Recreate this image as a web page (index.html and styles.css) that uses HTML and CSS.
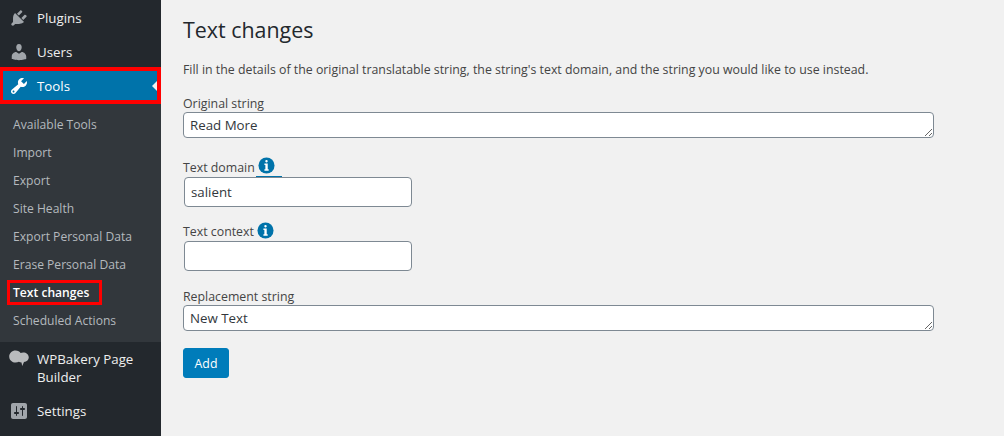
FILE: index.html
```html
<!DOCTYPE html>
<html lang="en">
<head>
    <meta charset="UTF-8">
    <title>Text changes</title>
    <link rel="stylesheet" href="styles.css">
</head>
<body>
    <div class="layout">
        <nav class="sidebar">
            <a class="menu-item">
                <svg class="menu-icon" viewBox="0 0 20 20"><path d="M13.11 4.36L9.87 7.6 8 5.73l3.24-3.24c.35-.34 1.05-.2 1.56.32.52.51.66 1.21.31 1.55zm-8 1.77l.91-1.12 9.01 9.01-1.19.84c-.71.71-2.63 1.16-3.82 1.16H6.14L4.9 17.26c-.59.59-1.54.59-2.12 0-.59-.58-.59-1.53 0-2.12l1.24-1.24v-3.88c0-1.13.4-3.19 1.09-3.89zm7.26 3.97l3.24-3.24c.34-.35 1.04-.21 1.55.31.52.51.66 1.21.31 1.55l-3.24 3.25z"/></svg>
                <span>Plugins</span>
            </a>
            <a class="menu-item">
                <svg class="menu-icon" viewBox="0 0 20 20"><path d="M10 9.25c-2.27 0-2.73-3.44-2.73-3.44C7 4.02 7.82 2 9.97 2c2.16 0 2.98 2.02 2.71 3.81 0 0-.41 3.44-2.68 3.44zm0 2.57L12.72 10c2.39 0 4.52 2.33 4.52 4.53v2.49s-3.65 1.13-7.24 1.13c-3.65 0-7.24-1.13-7.24-1.13v-2.49c0-2.25 1.94-4.48 4.47-4.48z"/></svg>
                <span>Users</span>
            </a>
            <a class="menu-item current">
                <svg class="menu-icon" viewBox="0 0 20 20"><path d="M16.68 9.77c-1.34 1.34-3.3 1.67-4.95.99l-5.41 6.52c-.99.99-2.59.99-3.58 0s-.99-2.59 0-3.57l6.52-5.42c-.68-1.65-.35-3.61.99-4.95 1.28-1.28 3.12-1.62 4.72-1.06l-2.89 2.89 2.82 2.82 2.86-2.87c.53 1.58.18 3.39-1.08 4.65zM3.81 16.21c.4.39 1.04.39 1.43 0 .4-.4.4-1.04 0-1.43-.39-.4-1.03-.4-1.43 0-.39.39-.39 1.03 0 1.43z"/></svg>
                <span>Tools</span>
            </a>
            <ul class="submenu">
                <li>Available Tools</li>
                <li>Import</li>
                <li>Export</li>
                <li>Site Health</li>
                <li>Export Personal Data</li>
                <li>Erase Personal Data</li>
                <li class="active"><span class="highlight-box">Text changes</span></li>
                <li>Scheduled Actions</li>
            </ul>
            <a class="menu-item tall">
                <svg class="menu-icon cloud" viewBox="0 0 20 20"><path d="M6.500 0.500C9 0.500 10.800 1.600 11.600 3 12.300 2.600 13.200 2.400 14.200 2.400 17.300 2.400 19.800 4.500 19.800 7.300 19.800 9.800 17.800 11.800 15 12.100L13.200 16 12.500 12.600C11.500 12.600 10.600 12.300 9.900 11.800 9 12.300 7.900 12.600 6.600 12.600 3 12.600 0.200 10 0.200 6.500 0.200 3.200 3 0.500 6.500 0.500z"/></svg>
                <span>WPBakery Page Builder</span>
            </a>
            <a class="menu-item">
                <svg class="menu-icon" viewBox="0 0 20 20"><path d="M18 16V4c0-1.100-.9-2-2-2H4c-1.100 0-2 .9-2 2v12c0 1.100.9 2 2 2h12c1.100 0 2-.9 2-2zM8 11h1c.55 0 1 .45 1 1s-.45 1-1 1H8v1.500c0 .28-.22.5-.5.5s-.5-.22-.5-.5V13H6c-.55 0-1-.45-1-1s.45-1 1-1h1V5.500c0-.28.22-.5.5-.5s.5.22.5.5V11zm5-2h-1c-.55 0-1-.45-1-1s.45-1 1-1h1V5.500c0-.28.22-.5.5-.5s.5.22.5.5V7h1c.55 0 1 .45 1 1s-.45 1-1 1h-1v5.500c0 .28-.22.5-.5.5s-.5-.22-.5-.5V9z"/></svg>
                <span>Settings</span>
            </a>
        </nav>

        <main class="content">
            <h1>Text changes</h1>
            <p class="intro">Fill in the details of the original translatable string, the string's text domain, and the string you would like to use instead.</p>
            <form class="changes-form">
                <div class="field field-long">
                    <label>Original string</label>
                    <textarea class="text-area" rows="1">Read More</textarea>
                </div>
                <div class="field field-domain">
                    <label>Text domain
                        <span class="info-wrap underlined">
                            <svg class="info" viewBox="0 0 18 18"><circle cx="9" cy="9" r="8.500"/><rect x="7.700" y="3.200" width="2.600" height="2.600" rx="1.200"/><path d="M6.800 7h3.500v6h1v1.500H6.800V13h1V8.500h-1z"/></svg>
                        </span>
                    </label>
                    <input class="text-input" type="text" value="salient">
                </div>
                <div class="field field-context">
                    <label>Text context
                        <span class="info-wrap">
                            <svg class="info" viewBox="0 0 18 18"><circle cx="9" cy="9" r="8.500"/><rect x="7.700" y="3.200" width="2.600" height="2.600" rx="1.200"/><path d="M6.800 7h3.500v6h1v1.500H6.800V13h1V8.500h-1z"/></svg>
                        </span>
                    </label>
                    <input class="text-input" type="text">
                </div>
                <div class="field field-long field-replace">
                    <label>Replacement string</label>
                    <textarea class="text-area" rows="1">New Text</textarea>
                </div>
                <button class="add-btn" type="button">Add</button>
            </form>
        </main>
    </div>
</body>
</html>
```

FILE: styles.css
```css
* {
    box-sizing: border-box;
}

html, body {
    margin: 0;
    height: 436px;
    overflow: hidden;
}

body {
    font-family: "Open Sans", "Noto Sans", sans-serif;
    font-size: 12.35px;
    background-color: #f1f1f1;
    color: #444;
}

.layout {
    display: flex;
    height: 436px;
}

/* Admin sidebar */
.sidebar {
    width: 161px;
    flex-shrink: 0;
    padding-top: 1px;
    background-color: #23282d;
    border-right: 1px solid #23282d;
}

.menu-item {
    display: flex;
    align-items: center;
    height: 34px;
    padding-left: 9px;
    font-size: 13.3px;
    color: #eee;
}

.menu-icon {
    width: 20px;
    height: 20px;
    margin-right: 8px;
    flex-shrink: 0;
    fill: #a0a5aa;
}

.menu-icon.cloud {
    fill: #b9bbbd;
}

.menu-item.current {
    position: relative;
    height: 37px;
    margin: -2px -1px 0 0;
    border: solid #f00;
    border-width: 4px 4px 4px 3px;
    padding-left: 6px;
    background-color: #0073aa;
    color: #fff;
}

.menu-item.current .menu-icon {
    fill: #fff;
}

/* little arrow pointing at the content */
.menu-item.current::after {
    content: "";
    position: absolute;
    right: 0;
    top: 10px;
    border: 5px solid transparent;
    border-left-width: 0;
    border-right-color: #f1f1f1;
}

.menu-item.tall {
    align-items: flex-start;
    height: 52px;
    padding-top: 8px;
    line-height: 18px;
}

.submenu {
    list-style: none;
    margin: 0 -1px 0 0;
    padding: 7px 0;
    background-color: #32373c;
    color: #b4b9be;
    font-size: 12.1px;
}

.submenu li {
    height: 28px;
    padding-left: 13px;
    line-height: 28px;
}

.submenu .active {
    color: #fff;
    font-weight: 600;
}

.highlight-box {
    display: inline-block;
    height: 25px;
    margin: 1px 0 0 -6px;
    padding: 0 10px 0 3px;
    border: 3px solid #f00;
    line-height: 19px;
    vertical-align: top;
}

/* Main content */
.content {
    flex: 1;
    padding: 0 70px 0 22px;
}

h1 {
    margin: 17px 0 0;
    font-size: 21.4px;
    font-weight: 400;
    line-height: 26px;
    color: #23282d;
}

.intro {
    margin: 17px 0 0;
    line-height: 19px;
}

.changes-form {
    margin-top: 15px;
}

.field label {
    display: flex;
    height: 19px;
    line-height: 19px;
}

.field-long label {
    height: 18px;
}

.field-domain {
    margin-top: 20px;
}

.field-context {
    margin-top: 15px;
}

.field-replace {
    margin-top: 16px;
}

.text-area,
.text-input {
    display: block;
    border: 1px solid #7e8993;
    border-radius: 4px;
    background-color: #fff;
    color: #32373c;
    font-family: inherit;
    font-size: 13.3px;
}

.text-area {
    width: 751px;
    height: 26px;
    padding: 2px 6px;
    line-height: 20px;
    overflow: hidden;
}

.text-input {
    width: 228px;
    height: 30px;
    margin-left: 1px;
    padding: 0 6px;
}

.info-wrap {
    display: block;
    flex-shrink: 0;
    width: 26px;
    height: 20px;
    margin-left: 1px;
    padding-left: 2px;
}

.underlined {
    margin-top: -1px;
    border-bottom: 1px solid #0073aa;
}

.info {
    display: block;
    width: 17px;
    height: 17px;
    fill: #fff;
}

.info circle {
    fill: #0073aa;
}

.add-btn {
    display: block;
    width: 46px;
    height: 30px;
    margin-top: 17px;
    padding: 0;
    border: 1px solid #007cba;
    border-radius: 3px;
    background-color: #007cba;
    color: #fff;
    font-family: inherit;
    font-size: 12.35px;
}
```
